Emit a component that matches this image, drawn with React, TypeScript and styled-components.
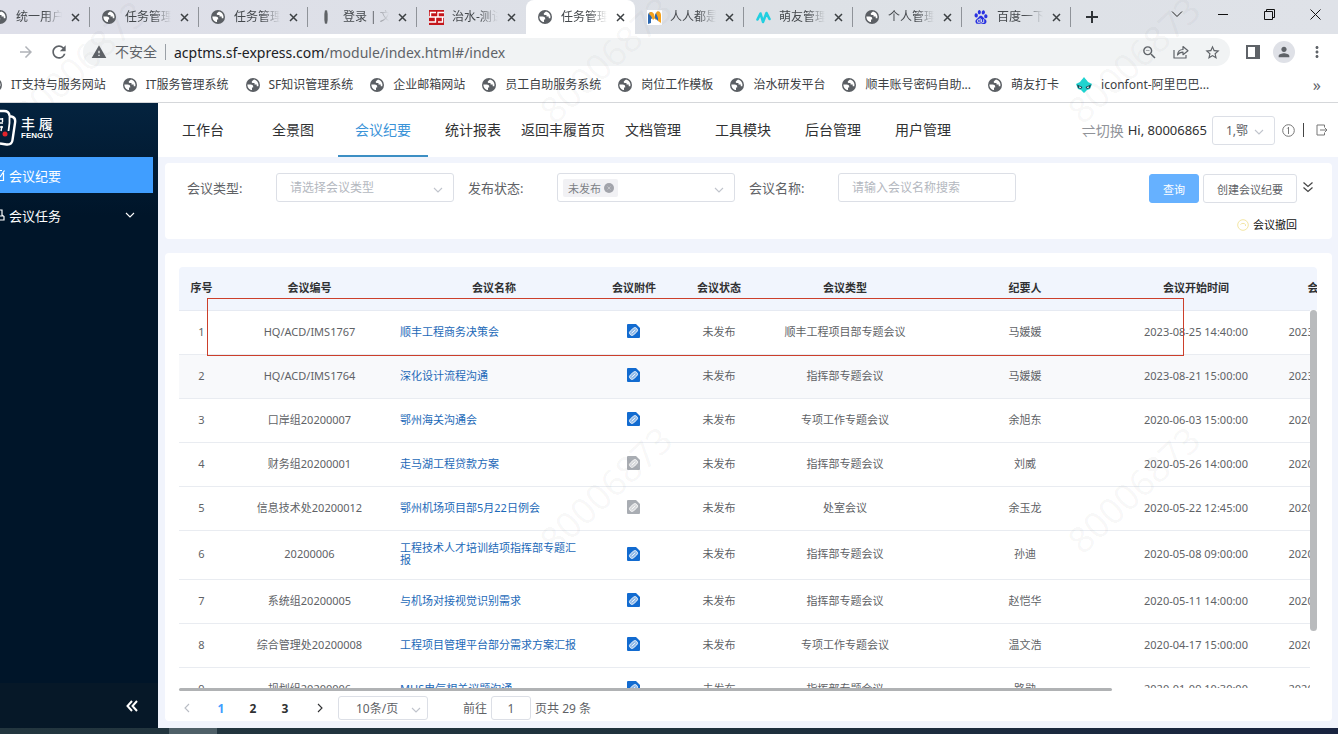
import React from "react";
import styled, { createGlobalStyle } from "styled-components";
import {
  MdArrowBack,
  MdArrowForward,
  MdMoreVert,
  MdPerson,
  MdRefresh,
  MdStarBorder,
  MdWarning,
  MdZoomOut,
} from "react-icons/md";
import { SiBaidu } from "react-icons/si";

const fontStack = `"Noto Sans", "Noto Sans CJK SC", sans-serif`;

const GlobalStyle = createGlobalStyle`
  *, *::before, *::after { box-sizing: border-box; }
  html, body { margin: 0; padding: 0; }
  body {
    font-family: ${fontStack};
    font-size: 12px;
    color: #606266;
    background: #fff;
  }
  button, input, select { font-family: inherit; margin: 0; }
  a { text-decoration: none; color: inherit; }
  svg { display: block; flex: none; }
`;

/* ---------- icons ---------- */

const Globe = ({ size = 14 }: { size?: number }) => (
  <svg width={size} height={size} viewBox="0 0 14 14" aria-hidden="true">
    <circle cx="7" cy="7" r="7" fill="#5b5f64" />
    <path
      d="M1.4 6.4h3.2c1.6 0 2.6.9 2.6 2.2v.9H6v2.6c-2.700-.300-4.700-2.700-4.600-5.700z"
      fill="#fff"
    />
    <path
      d="M8 1.500 6.200 3c-.8.700-.6 1.900.6 2h1.700v1.500h2.200v1.800h1.600c.8-2.700-.9-6-4.300-6.800z"
      fill="#fff"
    />
  </svg>
);

const Spindle = () => (
  <svg width="14" height="16" viewBox="0 0 14 16" aria-hidden="true">
    <path d="M5 1h2l1 4v6l-1 4H5l-1-4V5z" fill="#8b8e92" />
    <path d="M6 2v12" stroke="#33363a" strokeWidth="1" />
  </svg>
);

const SfLogo = () => (
  <svg width="15" height="15" viewBox="0 0 15 15" aria-hidden="true">
    <rect width="15" height="15" fill="#c4161c" />
    <path
      d="M7 2.500H1.500v4.500h5v5H0M15 2.500H9v4.500h4.500v5H9M0 7h15"
      fill="none"
      stroke="#fff"
      strokeWidth="1.400"
    />
  </svg>
);

const OrangeM = () => (
  <svg width="15" height="15" viewBox="0 0 15 15" aria-hidden="true">
    <rect width="15" height="15" fill="#fff" />
    <path d="M1 14V5c0-3 4-4 5-1v4L4 9v4z" fill="#2a66b0" />
    <path d="M2 4c1-3 4-2 5 0l1 4-2 2-2-4z" fill="#f5a11c" />
    <path d="M7 8 9 3c1-3 5-2 5 2v8l-3-2V7l-2 3z" fill="#f5a11c" />
    <path d="M8 5l1-2 2 5v3l-3-3z" fill="#2a66b0" />
  </svg>
);

const CyanM = () => (
  <svg width="15" height="15" viewBox="0 0 15 15" aria-hidden="true">
    <path
      d="M1.500 9.500 4.500 3.500 7 12 10.500 3 13.500 9"
      fill="none"
      stroke="#22cfe0"
      strokeWidth="2.600"
      strokeLinecap="round"
      strokeLinejoin="round"
    />
  </svg>
);

const IconfontLogo = () => (
  <svg width="16" height="16" viewBox="0 0 16 16" aria-hidden="true">
    <path d="M8 0c1 2 3 3 4 5l4 2-2 5-3 1-3 3-3-3-3-1-2-5 4-2c1-2 3-3 4-5z" fill="#1fd3cf" />
    <path d="M1 7.500 6.500 10 5 12 2 11zM15 7.500 9.500 10 11 12l3-1z" fill="#20414f" />
    <path d="M3 10l2 .500M13 10l-2 .500" stroke="#fff" strokeWidth="1" />
  </svg>
);

const Cross = () => (
  <svg width="9" height="9" viewBox="0 0 9 9" aria-hidden="true">
    <path d="M1 1l7 7M8 1 1 8" stroke="#3c4043" strokeWidth="1.500" />
  </svg>
);

const PlusMark = () => (
  <svg width="12" height="12" viewBox="0 0 12 12" aria-hidden="true">
    <path d="M6 0v12M0 6h12" stroke="#2f3337" strokeWidth="2" />
  </svg>
);

const ShareMark = () => (
  <svg width="16" height="14" viewBox="0 0 16 14" aria-hidden="true">
    <path
      d="M1 5v8h12v-3M4.500 10c.300-3.500 2.300-5.500 5.500-5.500V1.500L15 5.700l-5 4V7.200C7.500 7.200 5.800 8 4.500 10z"
      fill="none"
      stroke="#5f6368"
      strokeWidth="1.200"
      strokeLinejoin="round"
    />
  </svg>
);

const SidePanelMark = () => (
  <svg width="14" height="14" viewBox="0 0 14 14" aria-hidden="true">
    <path d="M1 1h12v12H1z" fill="none" stroke="#5f6368" strokeWidth="2" />
    <path d="M9 1h4v12H9z" fill="#5f6368" />
  </svg>
);

const Chevron = ({ size = 10, dir = "down" }: { size?: number; dir?: "down" | "left" | "right" }) => (
  <svg width={size} height={size} viewBox="0 0 10 10" aria-hidden="true">
    <path
      d={dir === "down" ? "M1 3l4 4 4-4" : dir === "left" ? "M7 1 3 5l4 4" : "M3 1l4 4-4 4"}
      fill="none"
      stroke="currentColor"
      strokeWidth="1.100"
    />
  </svg>
);

const DoubleDown = () => (
  <svg width="10" height="12" viewBox="0 0 10 12" aria-hidden="true">
    <path d="M.5 1.500 5 5.500l4.500-4M.5 6.500 5 10.500l4.500-4" fill="none" stroke="#444" strokeWidth="1.200" />
  </svg>
);

const DoubleLeft = () => (
  <svg width="12" height="12" viewBox="0 0 12 12" aria-hidden="true">
    <path d="M6 1 1.500 6 6 11M11 1 6.500 6 11 11" fill="none" stroke="#fff" strokeWidth="2" />
  </svg>
);

const FileClip = ({ muted }: { muted?: boolean }) => (
  <svg width="13" height="14" viewBox="0 0 13 14" aria-hidden="true">
    <path d="M1 0h8l4 4v9q0 1-1 1H1q-1 0-1-1V1q0-1 1-1z" fill={muted ? "#a9adb3" : "#126bd0"} />
    <g transform="rotate(-42 6.500 7.500)" fill="none" stroke="#fff">
      <rect x="2" y="5" width="9" height="5" rx="2.500" strokeWidth=".8" fill="#ffffff88" />
      <path d="M4 7.500h5" strokeWidth=".8" />
    </g>
  </svg>
);

const LogoMark = () => (
  <svg width="18" height="38" viewBox="0 0 18 38" aria-hidden="true">
    <path d="M0 2h4q5 0 5.500 4.500" fill="none" stroke="#fff" strokeWidth="2.400" />
    <path
      d="M10 7.500h1.500Q16 8.500 15 14l-2.500 17Q12 36 6.500 35.500L0 34.500"
      fill="none"
      stroke="#fff"
      strokeWidth="2.400"
    />
    <path d="M9.500 6v8L8.500 22" fill="none" stroke="#fff" strokeWidth="1.800" />
    <path d="M0 10h3M0 14h3M0 18h3M2.500 9v4M2 17l-1 5" fill="none" stroke="#fff" strokeWidth="1.400" />
    <circle cx="5" cy="25" r="2.500" fill="#e3242b" />
  </svg>
);

const NoteMark = () => (
  <svg width="6" height="14" viewBox="0 0 6 14" aria-hidden="true">
    <path d="M0 12.500h3.500V5M0 2.500h2M0 9l4.500-6.500" fill="none" stroke="#fff" strokeWidth="1.200" />
  </svg>
);

const TaskMark = () => (
  <svg width="6" height="14" viewBox="0 0 6 14" aria-hidden="true">
    <path d="M0 2h2v5l2 1.500V12H0M0 8h3" fill="none" stroke="#fff" strokeWidth="1.200" />
  </svg>
);

const InfoMark = () => (
  <svg width="13" height="13" viewBox="0 0 13 13" aria-hidden="true">
    <circle cx="6.500" cy="6.500" r="5.800" fill="none" stroke="#777" strokeWidth="1" />
    <path d="M6.500 3v7M5.300 4.500 6.500 3.300" fill="none" stroke="#777" strokeWidth="1" />
  </svg>
);

const ExitMark = () => (
  <svg width="12" height="12" viewBox="0 0 12 12" aria-hidden="true">
    <path d="M8.500 3.500V1H1v10h7.500V8.500M4 6h7M9 4l2 2-2 2" fill="none" stroke="#777" strokeWidth="1" />
  </svg>
);

const RecallMark = () => (
  <svg width="12" height="12" viewBox="0 0 12 12" aria-hidden="true">
    <circle cx="6" cy="6" r="5.300" fill="none" stroke="#f3e6a4" strokeWidth="1" />
    <path d="M3.500 5.500c1-1.500 4-1.500 5 0v1.500" fill="none" stroke="#f3e6a4" strokeWidth="1" />
  </svg>
);

const TagClose = () => (
  <svg width="10" height="10" viewBox="0 0 10 10" aria-hidden="true">
    <circle cx="5" cy="5" r="5" fill="#a2a4ab" />
    <path d="M3.500 3.500l3 3M6.500 3.500l-3 3" stroke="#c4c6ca" strokeWidth="1" />
  </svg>
);

/* ---------- browser chrome ---------- */

const Screen = styled.div`
  position: relative;
  display: flex;
  flex-direction: column;
  height: 100vh;
  overflow: hidden;
`;

const TabStrip = styled.div`
  display: flex;
  flex: none;
  height: 34px;
  padding-right: 15px;
  background: linear-gradient(90deg, #dedfe9, #dde1e6 60%, #dfe2e8);
  overflow: hidden;
`;

const TabList = styled.div`
  display: flex;
  margin-left: -19px;
`;

const Tab = styled.div<{ $active?: boolean; $divider?: boolean }>`
  display: flex;
  align-items: center;
  width: 109px;
  padding-left: 12px;
  border-radius: 8px 8px 0 0;
  color: #45494d;
  background: ${(p) => (p.$active ? "#fff" : "transparent")};

  &::after {
    content: "";
    width: 1px;
    height: 20px;
    margin-left: auto;
    background: ${(p) => (p.$divider ? "#8f9399" : "transparent")};
  }
`;

const FavIcon = styled.span`
  display: flex;
  justify-content: center;
  width: 14px;
  margin-right: 9px;
`;

const TabTitle = styled.a`
  width: 46px;
  margin-right: 6px;
  overflow: hidden;
  white-space: nowrap;
  line-height: 20px;
  mask-image: linear-gradient(90deg, #000 60%, transparent);
`;

const PlainButton = styled.button`
  display: flex;
  align-items: center;
  justify-content: center;
  padding: 3px;
  border: 0;
  background: none;
  color: #5f6368;
`;

const NewTab = styled(PlainButton)`
  margin-left: 12px;
`;

const WindowControls = styled.div`
  display: flex;
  align-items: center;
  gap: 30px;
  height: 28px;
  margin-left: auto;
`;

const WindowButton = styled(PlainButton)`
  width: 16px;
  padding: 0;
`;

const AddressRow = styled.div`
  display: flex;
  flex: none;
  align-items: center;
  height: 36px;
  padding-right: 9px;
  background: #fff;
`;

const HistoryButtons = styled.div`
  display: flex;
  gap: 8px;
  margin-left: -18px;
  margin-right: 11px;
`;

const Omnibox = styled.div`
  display: flex;
  flex: 1;
  align-items: center;
  height: 28px;
  padding: 0 6px 0 8px;
  border-radius: 14px;
  background: #f1f3f4;
`;

const Insecure = styled.span`
  display: flex;
  align-items: center;
  gap: 8px;
  padding-right: 8px;
  border-right: 1px solid #9aa0a6;
  font-size: 14px;
  line-height: 16px;
  color: #5f6368;
`;

const UrlText = styled.span`
  flex: 1;
  padding-left: 8px;
  font-size: 14px;
  color: #5f6368;

  b {
    font-weight: 400;
    color: #202124;
  }
`;

const OmniActions = styled.div`
  display: flex;
  gap: 9px;
`;

const ToolActions = styled.div`
  display: flex;
  align-items: center;
  gap: 10px;
  margin-left: 13px;
`;

const Avatar = styled(PlainButton)`
  width: 22px;
  height: 22px;
  border-radius: 50%;
  background: #dfe1e7;
`;

const BookmarkBar = styled.nav`
  display: flex;
  flex: none;
  align-items: center;
  gap: 17px;
  height: 33px;
  padding: 0 17px 2px 0;
  border-bottom: 1px solid #d5d7da;
  background: #fff;
  color: #3c4043;
  overflow: hidden;
`;

const Bookmark = styled.a`
  display: flex;
  flex: none;
  align-items: center;
  gap: 9px;
  line-height: 20px;
  white-space: nowrap;

  &:first-child {
    margin-left: -12px;
  }
`;

const More = styled(PlainButton)`
  margin-left: auto;
  padding: 0;
  font-size: 16px;
  line-height: 16px;
`;

/* ---------- application shell ---------- */

const Shell = styled.div`
  display: flex;
  flex: 1;
  min-height: 0;
`;

const Sidebar = styled.aside`
  display: flex;
  flex-direction: column;
  width: 158px;
  flex: none;
  background: linear-gradient(#04233f, #001529 18%);
`;

const Brand = styled.div`
  display: flex;
  align-items: center;
  gap: 3px;
  height: 54px;
  padding-bottom: 4px;
  color: #fff;
`;

const BrandName = styled.div`
  font-size: 14px;
  font-weight: 500;
  line-height: 16px;

  small {
    display: block;
    font-size: 8px;
    font-weight: 700;
    line-height: 8px;
    font-family: "Liberation Sans", sans-serif;
  }
`;

const MenuItem = styled.a<{ $active?: boolean }>`
  display: flex;
  align-items: center;
  gap: 3px;
  height: 36px;
  margin: 0 5px 4px 0;
  padding-right: 18px;
  font-size: 13px;
  color: #fff;
  background: ${(p) => (p.$active ? "#409eff" : "transparent")};

  span {
    flex: 1;
  }
`;

const CollapseBar = styled.div`
  display: flex;
  align-items: center;
  justify-content: flex-end;
  height: 45px;
  margin-top: auto;
  padding-right: 17px;
  background: #061828;
`;

const Main = styled.main`
  display: flex;
  flex: 1;
  flex-direction: column;
  min-width: 0;
  background: #f1f4fc;
`;

const TopNav = styled.header`
  display: flex;
  flex: none;
  align-items: stretch;
  height: 54px;
  padding-right: 7px;
  background: #fff;
`;

const NavLink = styled.a<{ $active?: boolean }>`
  display: flex;
  align-items: center;
  justify-content: center;
  width: 90px;
  border-bottom: 2px solid ${(p) => (p.$active ? "#3d8fc4" : "transparent")};
  font-size: 14px;
  white-space: nowrap;
  color: ${(p) => (p.$active ? "#3a93d8" : "#303133")};
`;

const UserArea = styled.div`
  display: flex;
  align-items: center;
  margin-left: auto;
  font-size: 13px;
  white-space: nowrap;
  color: #303133;
`;

const SwitchButton = styled(PlainButton)`
  padding: 0;
  margin-right: 4px;
  font-size: 14px;
  color: #909399;
`;

const Divider = styled.span`
  width: 1px;
  height: 14px;
  margin: 0 9px 0 5px;
  background: #444;
`;

const SelectWrap = styled.div<{ $w: number; $h: number }>`
  display: flex;
  align-items: center;
  width: ${(p) => p.$w}px;
  height: ${(p) => p.$h}px;
  border: 1px solid #dcdfe6;
  border-radius: 3px;
  background: #fff;
  color: #c0c4cc;
`;

const NativeSelect = styled.select<{ $hint?: boolean }>`
  flex: 1;
  min-width: 0;
  height: 100%;
  padding: 0 0 0 13px;
  border: 0;
  outline: 0;
  appearance: none;
  background: transparent;
  font-size: 12px;
  color: ${(p) => (p.$hint ? "#b4b8c0" : "#606266")};
`;

const ChevronSlot = styled.span`
  display: flex;
  padding: 4px 10px 0 0;
  pointer-events: none;
`;

const UserSelect = styled(SelectWrap)`
  margin: 0 4px 0 5px;
`;

const FilterPanel = styled.section`
  display: flex;
  flex: none;
  align-items: flex-start;
  height: 76px;
  margin: 6px 6px 0 7px;
  padding: 10px 19px 0 22px;
  border-radius: 4px;
  background: #fff;
`;

const FilterFields = styled.div`
  display: flex;
  flex: 1;
  gap: 14px;
`;

const Field = styled.div`
  display: flex;
  align-items: center;
`;

const FieldLabel = styled.label`
  width: 89px;
  font-size: 13px;
  white-space: nowrap;
`;

const TextInput = styled.input`
  width: 178px;
  height: 29px;
  padding: 0 13px;
  border: 1px solid #dcdfe6;
  border-radius: 3px;
  font-size: 12px;
  color: #606266;
  &::placeholder {
    color: #b4b8c0;
  }
`;

const Tag = styled.span`
  display: flex;
  align-items: center;
  gap: 3px;
  height: 18px;
  margin-left: 5px;
  padding: 0 4px 0 5px;
  border-radius: 2px;
  background: #f1f1f4;
  font-size: 11px;
  white-space: nowrap;
  color: #7c7f85;

  button {
    padding: 0;
  }
`;

const FilterActions = styled.div`
  display: grid;
  grid-template-columns: auto auto 12px;
  align-items: center;
  column-gap: 4px;
  row-gap: 14px;
  padding-top: 1px;
`;

const ActionButton = styled.button<{ $primary?: boolean }>`
  height: 29px;
  padding: 0 13px;
  border: 1px solid ${(p) => (p.$primary ? "#66b1ff" : "#dcdfe6")};
  border-radius: 3px;
  background: ${(p) => (p.$primary ? "#66b1ff" : "#fff")};
  color: ${(p) => (p.$primary ? "#fff" : "#606266")};
  font-size: 11px;
  white-space: nowrap;
`;

const ExpandButton = styled(PlainButton)`
  justify-content: flex-end;
  padding: 0 0 3px;
`;

const RecallLink = styled.a`
  display: flex;
  grid-column: 1 / 3;
  align-items: center;
  justify-content: flex-end;
  gap: 4px;
  line-height: 16px;
  font-size: 11px;
  color: #111;
`;

/* ---------- table ---------- */

const TableCard = styled.section`
  display: flex;
  flex: 1;
  flex-direction: column;
  min-height: 0;
  margin: 14px 6px 7px 7px;
  padding: 14px 15px 0 14px;
  border-radius: 4px;
  background: #fff;
`;

const TableView = styled.div`
  position: relative;
  flex: 1;
  min-height: 0;
`;

const TableClip = styled.div`
  height: 100%;
  overflow: hidden;
  border-radius: 4px 4px 0 0;
`;

const Grid = styled.table`
  width: 100%;
  min-width: 1233px;
  border-collapse: separate;
  border-spacing: 0;
  table-layout: fixed;
  font-size: 11px;
  line-height: 12px;
  text-align: center;
`;

const HeadCell = styled.th`
  height: 44px;
  padding: 0 0 2px;
  border-bottom: 1px solid #e6eaf2;
  background: #f1f5fd;
  font-weight: 700;
  color: #303133;
`;

const BodyRow = styled.tr<{ $shade?: boolean }>`
  height: 44px;
  background: ${(p) => (p.$shade ? "#f8f9fb" : "#fff")};
`;

const Cell = styled.td`
  padding: 0 0 2px;
  border-bottom: 1px solid #e9ecf1;
`;

const NameCell = styled(Cell)`
  padding: 11px 10px 13px 5px;
  text-align: left;
  color: #1c69b8;
`;

const IconCell = styled(Cell)`
  padding: 0 2px 3px 0;

  svg {
    margin: 0 auto;
  }
`;

const VerticalTrack = styled.div`
  position: absolute;
  top: 43px;
  right: 0;
  bottom: 0;
  width: 7px;
  background: #fff;

  &::before {
    content: "";
    display: block;
    height: 85%;
    border-radius: 4px;
    background: #b9bbbd;
  }
`;

const HorizontalTrack = styled.div`
  height: 3px;

  &::before {
    content: "";
    display: block;
    width: 82%;
    height: 3px;
    border-radius: 2px;
    background: #b0b2b4;
  }
`;

const Highlight = styled.div`
  position: absolute;
  top: 31px;
  left: 28px;
  width: 977px;
  height: 58px;
  border: 1px solid #cc3f2b;
  pointer-events: none;
`;

const Pager = styled.nav`
  display: flex;
  align-items: center;
  height: 30px;
  padding-top: 4px;
  white-space: nowrap;
`;

const PageButton = styled.button<{ $current?: boolean; $faint?: boolean }>`
  display: flex;
  align-items: center;
  justify-content: center;
  width: 32px;
  padding: 0;
  border: 0;
  background: none;
  font-size: 12px;
  font-weight: 700;
  color: ${(p) => (p.$current ? "#409eff" : p.$faint ? "#b8bcc4" : "#303133")};
`;

const PageArrow = styled(PageButton)`
  width: 37px;
  &:first-child {
    width: 16px;
    margin-right: 10px;
  }
`;

const PageSizeSelect = styled(SelectWrap)`
  margin-right: 35px;
  select {
    padding-left: 17px;
  }
  span {
    padding-right: 6px;
  }
`;

const PageInput = styled.input`
  width: 40px;
  height: 24px;
  margin: 0 4px;
  padding: 0;
  border: 1px solid #dcdfe6;
  border-radius: 3px;
  text-align: center;
  font-size: 12px;
  color: #606266;
`;

const Taskbar = styled.footer`
  flex: none;
  height: 6px;
  padding-left: 169px;
  background: linear-gradient(90deg, #23363f, #1f323d 50%, #18233f);

  &::before {
    content: "";
    display: block;
    width: 48px;
    height: 6px;
    background: #4f6068;
  }
`;

const Watermark = styled.div<{ $x: number; $y: number }>`
  position: absolute;
  left: ${(p) => p.$x}px;
  top: ${(p) => p.$y}px;
  transform: translate(-50%, -50%) rotate(-43deg);
  font-family: "Open Sans", sans-serif;
  font-size: 36px;
  font-weight: 400;
  line-height: 36px;
  color: rgba(60, 60, 60, 0.05);
  pointer-events: none;
`;

/* ---------- data ---------- */

const tabs: { title: string; icon: React.ReactNode; active?: boolean; divider?: boolean }[] = [
  { title: "统一用户", icon: <Globe />, divider: true },
  { title: "任务管理", icon: <Globe />, divider: true },
  { title: "任务管理", icon: <Globe />, divider: true },
  { title: "登录 | 文", icon: <Spindle />, divider: true },
  { title: "治水-测试", icon: <SfLogo /> },
  { title: "任务管理", icon: <Globe />, active: true },
  { title: "人人都是", icon: <OrangeM />, divider: true },
  { title: "萌友管理", icon: <CyanM />, divider: true },
  { title: "个人管理", icon: <Globe />, divider: true },
  { title: "百度一下", icon: <SiBaidu size={14} color="#2932e1" />, divider: true },
];

const bookmarks = [
  "IT支持与服务网站",
  "IT服务管理系统",
  "SF知识管理系统",
  "企业邮箱网站",
  "员工自助服务系统",
  "岗位工作模板",
  "治水研发平台",
  "顺丰账号密码自助...",
  "萌友打卡",
];

const navItems = [
  "工作台",
  "全景图",
  "会议纪要",
  "统计报表",
  "返回丰履首页",
  "文档管理",
  "工具模块",
  "后台管理",
  "用户管理",
];

const columns: [string, number][] = [
  ["序号", 45],
  ["会议编号", 171],
  ["会议名称", 198],
  ["会议附件", 82],
  ["会议状态", 88],
  ["会议类型", 164],
  ["纪要人", 196],
  ["会议开始时间", 146],
  ["会议结束时间", 143],
];

type Meeting = {
  code: string;
  name: string;
  type: string;
  by: string;
  start: string;
  end: string;
  noFile?: boolean;
};

const meetings: Meeting[] = [
  { code: "HQ/ACD/IMS1767", name: "顺丰工程商务决策会", type: "顺丰工程项目部专题会议", by: "马媛媛", start: "2023-08-25 14:40:00", end: "2023-08-25 15:40:00" },
  { code: "HQ/ACD/IMS1764", name: "深化设计流程沟通", type: "指挥部专题会议", by: "马媛媛", start: "2023-08-21 15:00:00", end: "2023-08-21 16:00:00" },
  { code: "口岸组20200007", name: "鄂州海关沟通会", type: "专项工作专题会议", by: "余旭东", start: "2020-06-03 15:00:00", end: "2020-06-03 16:00:00" },
  { code: "财务组20200001", name: "走马湖工程贷款方案", type: "指挥部专题会议", by: "刘威", start: "2020-05-26 14:00:00", end: "2020-05-26 15:00:00", noFile: true },
  { code: "信息技术处20200012", name: "鄂州机场项目部5月22日例会", type: "处室会议", by: "余玉龙", start: "2020-05-22 12:45:00", end: "2020-05-22 13:45:00", noFile: true },
  { code: "20200006", name: "工程技术人才培训结项指挥部专题汇报", type: "指挥部专题会议", by: "孙迪", start: "2020-05-08 09:00:00", end: "2020-05-08 10:00:00" },
  { code: "系统组20200005", name: "与机场对接视觉识别需求", type: "指挥部专题会议", by: "赵恺华", start: "2020-05-11 14:00:00", end: "2020-05-11 15:00:00" },
  { code: "综合管理处20200008", name: "工程项目管理平台部分需求方案汇报", type: "专项工作专题会议", by: "温文浩", start: "2020-04-17 15:00:00", end: "2020-04-17 16:00:00" },
  { code: "规划组20200006", name: "MHS电气相关议题沟通", type: "指挥部专题会议", by: "路勋", start: "2020-01-09 10:30:00", end: "2020-01-09 11:30:00" },
];

const watermarks: [number, number][] = [
  [80, 64],
  [606, 60],
  [1134, 60],
  [606, 490],
  [1134, 490],
];

/* ---------- page ---------- */

export default function App() {
  return (
    <Screen>
      <GlobalStyle />

      <TabStrip>
        <TabList>
          {tabs.map((t, i) => (
            <Tab key={i} $active={t.active} $divider={t.divider}>
              <FavIcon>{t.icon}</FavIcon>
              <TabTitle href="#">{t.title}</TabTitle>
              <PlainButton aria-label="关闭标签页">
                <Cross />
              </PlainButton>
            </Tab>
          ))}
        </TabList>
        <NewTab aria-label="新标签页">
          <PlusMark />
        </NewTab>
        <WindowControls>
          <WindowButton aria-label="搜索标签页">
            <svg width="12" height="12" viewBox="0 0 12 12">
              <path d="M1 3.500l5 5 5-5" fill="none" stroke="#222" strokeWidth="1" />
            </svg>
          </WindowButton>
          <WindowButton aria-label="最小化">
            <svg width="10" height="10" viewBox="0 0 10 10">
              <path d="M0 5.500h10" stroke="#111" strokeWidth="1" />
            </svg>
          </WindowButton>
          <WindowButton aria-label="还原">
            <svg width="11" height="11" viewBox="0 0 11 11">
              <path d="M.5 2.500h8v8h-8zM2.500 2.500v-2h8v8h-2" fill="none" stroke="#111" strokeWidth="1" />
            </svg>
          </WindowButton>
          <WindowButton aria-label="关闭">
            <svg width="11" height="11" viewBox="0 0 11 11">
              <path d="M.5.500l10 10M10.500.500l-10 10" stroke="#111" strokeWidth="1" />
            </svg>
          </WindowButton>
        </WindowControls>
      </TabStrip>

      <AddressRow>
        <HistoryButtons>
          <PlainButton aria-label="后退">
            <MdArrowBack size={18} />
          </PlainButton>
          <PlainButton aria-label="前进">
            <MdArrowForward size={18} color="#b0b3b8" />
          </PlainButton>
          <PlainButton aria-label="重新加载">
            <MdRefresh size={20} />
          </PlainButton>
        </HistoryButtons>
        <Omnibox>
          <Insecure>
            <MdWarning size={16} />
            不安全
          </Insecure>
          <UrlText>
            <b>acptms.sf-express.com</b>/module/index.html#/index
          </UrlText>
          <OmniActions>
            <PlainButton aria-label="缩放">
              <MdZoomOut size={17} />
            </PlainButton>
            <PlainButton aria-label="分享">
              <ShareMark />
            </PlainButton>
            <PlainButton aria-label="收藏">
              <MdStarBorder size={17} />
            </PlainButton>
          </OmniActions>
        </Omnibox>
        <ToolActions>
          <PlainButton aria-label="侧边栏">
            <SidePanelMark />
          </PlainButton>
          <Avatar aria-label="用户">
            <MdPerson size={16} />
          </Avatar>
          <PlainButton aria-label="更多">
            <MdMoreVert size={18} />
          </PlainButton>
        </ToolActions>
      </AddressRow>

      <BookmarkBar>
        {bookmarks.map((b) => (
          <Bookmark key={b} href="#">
            <Globe />
            {b}
          </Bookmark>
        ))}
        <Bookmark href="#">
          <IconfontLogo />
          iconfont-阿里巴巴...
        </Bookmark>
        <More>»</More>
      </BookmarkBar>

      <Shell>
        <Sidebar>
          <Brand>
            <LogoMark />
            <BrandName>
              丰 履<small>FENGLV</small>
            </BrandName>
          </Brand>
          <MenuItem href="#" $active>
            <NoteMark />
            <span>会议纪要</span>
          </MenuItem>
          <MenuItem href="#">
            <TaskMark />
            <span>会议任务</span>
            <Chevron />
          </MenuItem>
          <CollapseBar>
            <PlainButton aria-label="收起菜单">
              <DoubleLeft />
            </PlainButton>
          </CollapseBar>
        </Sidebar>

        <Main>
          <TopNav>
            {navItems.map((n) => (
              <NavLink key={n} href="#" $active={n === "会议纪要"}>
                {n}
              </NavLink>
            ))}
            <UserArea>
              <SwitchButton>⇌切换</SwitchButton>
              Hi, 80006865
              <UserSelect $w={63} $h={29}>
                <NativeSelect aria-label="组织">
                  <option>1,鄂</option>
                </NativeSelect>
                <ChevronSlot>
                  <Chevron />
                </ChevronSlot>
              </UserSelect>
              <PlainButton aria-label="提示">
                <InfoMark />
              </PlainButton>
              <Divider />
              <PlainButton aria-label="退出">
                <ExitMark />
              </PlainButton>
            </UserArea>
          </TopNav>

          <FilterPanel>
            <FilterFields>
              <Field>
                <FieldLabel htmlFor="meeting-type">会议类型:</FieldLabel>
                <SelectWrap $w={178} $h={29}>
                  <NativeSelect id="meeting-type" $hint>
                    <option>请选择会议类型</option>
                  </NativeSelect>
                  <ChevronSlot>
                    <Chevron />
                  </ChevronSlot>
                </SelectWrap>
              </Field>
              <Field>
                <FieldLabel htmlFor="publish-state">发布状态:</FieldLabel>
                <SelectWrap $w={178} $h={29}>
                  <Tag>
                    未发布
                    <PlainButton aria-label="移除未发布">
                      <TagClose />
                    </PlainButton>
                  </Tag>
                  <NativeSelect id="publish-state">
                    <option></option>
                  </NativeSelect>
                  <ChevronSlot>
                    <Chevron />
                  </ChevronSlot>
                </SelectWrap>
              </Field>
              <Field>
                <FieldLabel htmlFor="meeting-name">会议名称:</FieldLabel>
                <TextInput id="meeting-name" placeholder="请输入会议名称搜索" />
              </Field>
            </FilterFields>
            <FilterActions>
              <ActionButton $primary>查询</ActionButton>
              <ActionButton>创建会议纪要</ActionButton>
              <ExpandButton aria-label="展开">
                <DoubleDown />
              </ExpandButton>
              <RecallLink href="#">
                <RecallMark />
                会议撤回
              </RecallLink>
            </FilterActions>
          </FilterPanel>

          <TableCard>
            <TableView>
              <TableClip>
                <Grid>
                  <colgroup>
                    {columns.map(([label, width]) => (
                      <col key={label} width={width} />
                    ))}
                  </colgroup>
                  <thead>
                    <tr>
                      {columns.map(([label]) => (
                        <HeadCell key={label} scope="col">
                          {label}
                        </HeadCell>
                      ))}
                    </tr>
                  </thead>
                  <tbody>
                    {meetings.map((m, i) => (
                      <BodyRow key={m.code} $shade={i === 1}>
                        <Cell>{i + 1}</Cell>
                        <Cell>{m.code}</Cell>
                        <NameCell>
                          <a href="#">{m.name}</a>
                        </NameCell>
                        <IconCell>
                          <FileClip muted={m.noFile} />
                        </IconCell>
                        <Cell>未发布</Cell>
                        <Cell>{m.type}</Cell>
                        <Cell>{m.by}</Cell>
                        <Cell>{m.start}</Cell>
                        <Cell>{m.end}</Cell>
                      </BodyRow>
                    ))}
                  </tbody>
                </Grid>
              </TableClip>
              <VerticalTrack />
              <Highlight />
            </TableView>
            <HorizontalTrack />
            <Pager>
              <PageArrow $faint aria-label="上一页">
                <Chevron dir="left" />
              </PageArrow>
              <PageButton $current>1</PageButton>
              <PageButton>2</PageButton>
              <PageButton>3</PageButton>
              <PageArrow aria-label="下一页">
                <Chevron dir="right" />
              </PageArrow>
              <PageSizeSelect $w={90} $h={24}>
                <NativeSelect aria-label="每页条数">
                  <option>10条/页</option>
                </NativeSelect>
                <ChevronSlot>
                  <Chevron />
                </ChevronSlot>
              </PageSizeSelect>
              <label htmlFor="page-no">前往</label>
              <PageInput id="page-no" defaultValue="1" />
              页共 29 条
            </Pager>
          </TableCard>
        </Main>
      </Shell>

      <Taskbar />

      {watermarks.map(([x, y]) => (
        <Watermark key={`${x}-${y}`} $x={x} $y={y} aria-hidden="true">
          80006873
        </Watermark>
      ))}
    </Screen>
  );
}
